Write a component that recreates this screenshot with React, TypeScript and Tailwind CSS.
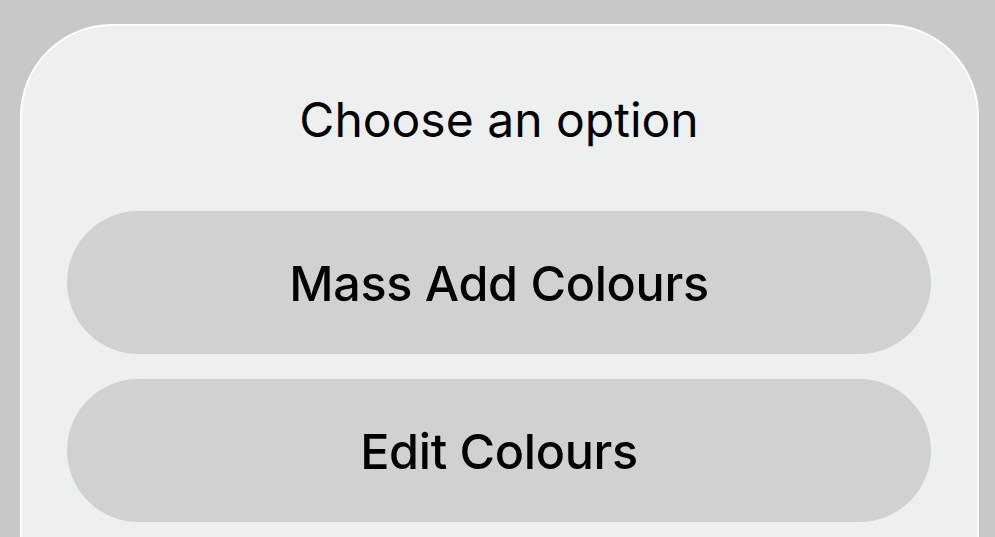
export default function App() {
  const options = ["Mass Add Colours", "Edit Colours"];

  return (
    <div className="h-[537px] overflow-hidden bg-[#c8c8c8] pt-6 pl-5 pr-4 font-['Inter',sans-serif] text-black">
      <div className="h-[600px] rounded-t-[92px] border-2 border-white bg-[#eef0ef] pl-[45px] pr-[46px] pt-[66px]">
        <h1 className="text-center text-[48px] leading-[56px] font-normal">
          Choose an option
        </h1>
        <div className="mt-[63px] flex flex-col gap-[25px]">
          {options.map((label) => (
            <button
              key={label}
              className="h-[143px] w-full rounded-full bg-[#d1d1d1] pt-[3px] text-[48.5px] font-medium tracking-[-0.3px]"
            >
              {label}
            </button>
          ))}
        </div>
      </div>
    </div>
  );
}
